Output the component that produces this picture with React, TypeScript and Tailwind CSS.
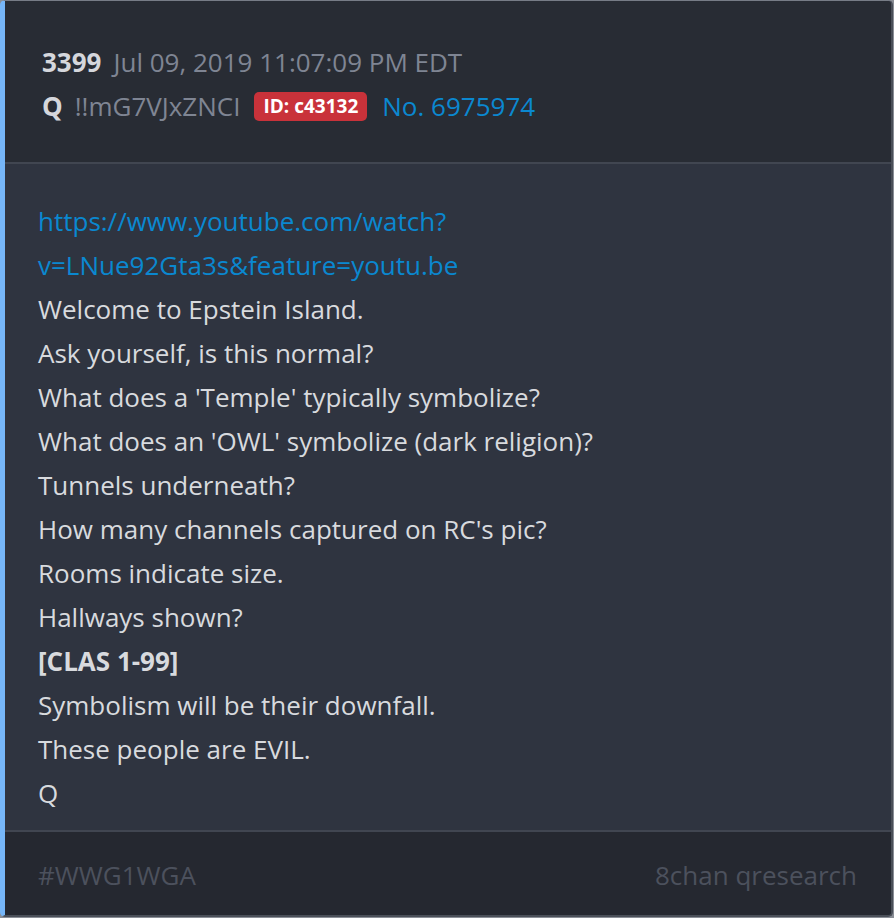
const lines: { text: string; bold?: boolean }[] = [
  { text: "Welcome to Epstein Island." },
  { text: "Ask yourself, is this normal?" },
  { text: "What does a 'Temple' typically symbolize?" },
  { text: "What does an 'OWL' symbolize (dark religion)?" },
  { text: "Tunnels underneath?" },
  { text: "How many channels captured on RC's pic?" },
  { text: "Rooms indicate size." },
  { text: "Hallways shown?" },
  { text: "[CLAS 1-99]", bold: true },
  { text: "Symbolism will be their downfall." },
  { text: "These people are EVIL." },
  { text: "Q" },
];

export default function App() {
  return (
    <div className="w-[894px] h-[918px] bg-[#8a8e96] font-['Open_Sans',sans-serif]">
      <div className="w-[893px] h-[917px] flex flex-col rounded-[5px] overflow-hidden border-l-[5px] border-l-[#76b6f8] border-t border-t-[#777c86] border-r-2 border-r-[#4a4f58] border-b-2 border-b-[#4a4f58] bg-[#2f3440]">
        <header className="bg-[#282c34] pl-[37px] pt-[39px] pb-[34px] text-[26px] leading-[44px] border-b-2 border-b-[#414651]">
          <div className="flex items-baseline gap-[12px]">
            <span className="font-bold text-[#d5d7dc]">3399</span>
            <span className="text-[#7f8593]">Jul 09, 2019 11:07:09 PM EDT</span>
          </div>
          <div className="flex items-center">
            <span className="font-bold text-[#d5d7dc]">Q</span>
            <span className="ml-[12px] text-[#7f8593]">!!mG7VJxZNCI</span>
            <span className="ml-[14px] h-[29px] px-[9px] rounded-[5px] bg-[#c9323a] text-white font-bold text-[19px] leading-[29px]">
              ID: c43132
            </span>
            <span className="ml-[15px] text-[#0b88d0]">No. 6975974</span>
          </div>
        </header>
        <main className="flex-1 pl-[33px] pt-[35px] text-[26px] leading-[44px] text-[#d8dade]">
          <a className="block text-[#0a88d0]" href="#">
            https://www.youtube.com/watch?
            <br />
            v=LNue92Gta3s&amp;feature=youtu.be
          </a>
          {lines.map((l, i) => (
            <p key={i} className={l.bold ? "font-bold" : ""}>
              {l.text}
            </p>
          ))}
        </main>
        <footer className="h-[85px] flex items-center justify-between pl-[33px] pr-[34px] pt-[3px] bg-[#252830] border-t-2 border-t-[#414651] text-[26px] text-[#4c515d]">
          <span>#WWG1WGA</span>
          <span>8chan qresearch</span>
        </footer>
      </div>
    </div>
  );
}
